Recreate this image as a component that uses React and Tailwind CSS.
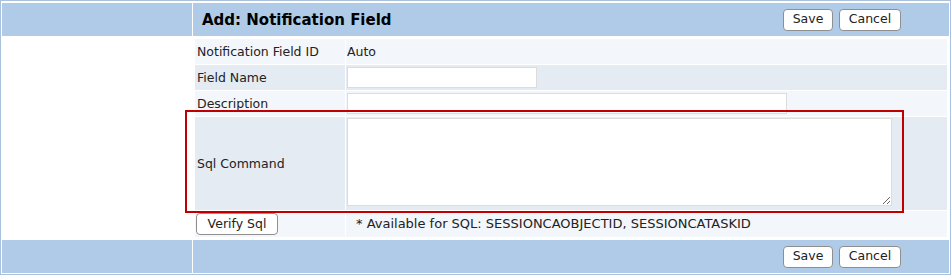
import React from "react";

const Btn = ({ children, className = "" }) => (
  <button
    className={`h-[22px] bg-white border border-[#8f8f8f] rounded-[4px] text-[12.5px] text-[#222] leading-none ${className}`}
  >
    {children}
  </button>
);

const Row = ({ label, dark, h = "h-[25px]", children }) => (
  <div className={`flex gap-px ${h}`}>
    <div
      className={`w-[150px] shrink-0 flex items-center pl-[2px] pt-[2px] ${
        dark ? "bg-[#e4ebf3]" : "bg-[#f3f6fa]"
      }`}
    >
      {label}
    </div>
    <div
      className={`flex-1 flex items-center pl-px ${
        dark ? "bg-[#e4ebf3]" : "bg-[#f3f6fa]"
      }`}
    >
      {children}
    </div>
  </div>
);

export default function App() {
  return (
    <div
      className="relative w-[951px] h-[275px] bg-white border border-[#a9c1dd] pt-[2px] pl-px pr-px text-[12.5px] text-[#222]"
      style={{ fontFamily: '"DejaVu Sans", Verdana, sans-serif' }}
    >
      {/* header */}
      <div className="flex gap-px h-[33px]">
        <div className="w-[190px] bg-[#b0cbe7]" />
        <div className="flex-1 bg-[#b0cbe7] flex items-center pl-[9px] pr-[48px]">
          <h1 className="font-bold text-[15px] text-black pt-[2px]">
            Add: Notification Field
          </h1>
          <div className="ml-auto flex gap-[6px]">
            <Btn className="w-[50px]">Save</Btn>
            <Btn className="w-[62px]">Cancel</Btn>
          </div>
        </div>
      </div>

      {/* body */}
      <div className="flex gap-px">
        <div className="w-[190px]" />
        <div className="flex-1 flex flex-col gap-px pt-[3px] pb-[3px] pl-[2px] pr-[2px]">
          <Row label="Notification Field ID">
            <span className="pt-[2px]">Auto</span>
          </Row>
          <Row label="Field Name" dark>
            <input className="w-[190px] h-[21px] bg-white border border-[#dcdcdc]" />
          </Row>
          <Row label="Description">
            <input className="w-[440px] h-[21px] bg-white border border-[#dcdcdc]" />
          </Row>
          <Row label="Sql Command" dark h="h-[93px]">
            <textarea className="self-start mt-px w-[545px] h-[88px] bg-white border border-[#dcdcdc]" />
          </Row>
          <Row label="" h="h-[26px]">
            <span className="pl-[9px] text-[13px]">
              * Available for SQL: SESSIONCAOBJECTID, SESSIONCATASKID
            </span>
          </Row>
        </div>
      </div>

      {/* footer */}
      <div className="flex gap-px h-[33px]">
        <div className="w-[190px] bg-[#b0cbe7]" />
        <div className="flex-1 bg-[#b0cbe7] flex items-center justify-end pr-[48px]">
          <div className="flex gap-[6px]">
            <Btn className="w-[50px]">Save</Btn>
            <Btn className="w-[62px]">Cancel</Btn>
          </div>
        </div>
      </div>

      {/* verify button sits in the label cell of last row */}
      <div className="absolute left-[195px] top-[212px]">
        <Btn className="w-[82px]">Verify Sql</Btn>
      </div>

      {/* highlight box */}
      <div className="absolute left-[184px] top-[109px] w-[719px] h-[103px] border-2 border-[#c00000] pointer-events-none" />
    </div>
  );
}
